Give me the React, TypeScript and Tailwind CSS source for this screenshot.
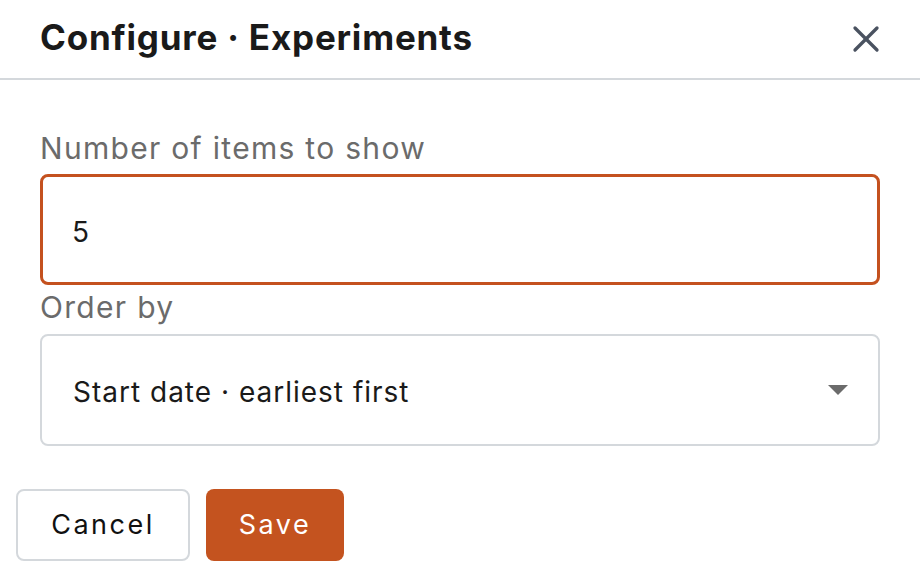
import { X } from 'lucide-react'

export default function App() {
  return (
    <div
      className="w-[920px] h-[576px] bg-white overflow-hidden"
      style={{ fontFamily: 'Inter, "Liberation Sans", sans-serif' }}
    >
      <div className="h-[80px] flex items-center justify-between pl-[40px] pr-[32px] border-b-2 border-[#d4d8dc]">
        <h1 className="text-[35px] font-bold text-[#1a1a1a] tracking-[0.8px] -mt-[3px]">Configure · Experiments</h1>
        <X className="w-[44px] h-[44px] text-[#4a5260]" strokeWidth={1.8} />
      </div>

      <div className="px-[40px] pt-[50px]">
        <label className="block text-[30px] leading-[36px] text-[#6b6b6b] tracking-[1.3px] mb-[8px]">
          Number of items to show
        </label>
        <div className="h-[111px] rounded-[8px] border-[3px] border-[#c4511f] flex items-center px-[29px] pt-[4px]">
          <span className="text-[28px] text-[#1a1a1a] tracking-[1px]">5</span>
        </div>

        <label className="block text-[30px] leading-[36px] text-[#6b6b6b] tracking-[1.3px] mt-[4px] mb-[9px]">
          Order by
        </label>
        <div className="h-[112px] rounded-[8px] border-2 border-[#d4d8dc] flex items-center justify-between pl-[31px] pr-[30px] pt-[3px]">
          <span className="text-[28px] text-[#1a1a1a] tracking-[1px]">Start date · earliest first</span>
          <svg width="20" height="11" viewBox="0 0 20 11" className="-mt-[3px]">
            <path d="M0 0 L20 0 L10 10 Z" fill="#6b6b6b" />
          </svg>
        </div>
      </div>

      <div className="flex gap-[16px] px-[16px] pt-[43px]">
        <button className="w-[174px] h-[72px] rounded-[8px] border-2 border-[#d4d8dc] bg-white text-[27px] text-[#111] tracking-[2.5px]">
          Cancel
        </button>
        <button className="w-[138px] h-[72px] rounded-[8px] bg-[#c4531f] text-[27px] text-white tracking-[2.5px]">
          Save
        </button>
      </div>
    </div>
  )
}
